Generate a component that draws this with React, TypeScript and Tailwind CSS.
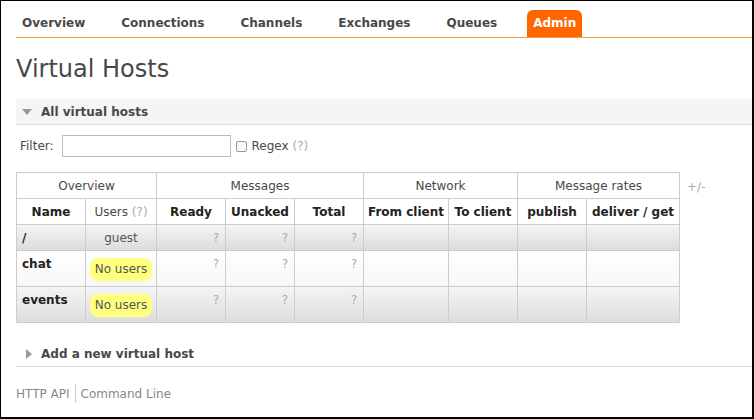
import React from "react";

const font = { fontFamily: '"DejaVu Sans", Verdana, sans-serif' };

const navItems = ["Overview", "Connections", "Channels", "Exchanges", "Queues"];

function Q() {
  return <span className="text-[#aaaaaa]">?</span>;
}

type Row = { name: string; users: string | null; tall: boolean; gray: boolean };

const rows: Row[] = [
  { name: "/", users: "guest", tall: false, gray: true },
  { name: "chat", users: null, tall: true, gray: false },
  { name: "events", users: null, tall: true, gray: true },
];

export default function App() {
  return (
    <div
      style={font}
      className="w-[754px] h-[419px] bg-white border-t border-l border-r-2 border-b-2 border-black text-[12px] text-[#484848] overflow-hidden"
    >
      {/* Nav */}
      <div className="ml-[15px] flex gap-[24px] pt-[9px] border-b border-[#eaa142]">
        {navItems.map((n) => (
          <div key={n} className="px-[6px] h-[27px] leading-[27px] font-bold text-[12px] text-[#484848]">
            {n}
          </div>
        ))}
        <div className="px-[6px] h-[27px] leading-[27px] font-bold text-[12px] text-white bg-[#ff6600] rounded-t-[6px]">
          Admin
        </div>
      </div>

      {/* Title */}
      <div className="ml-[15px] mt-[17px] h-[28px] leading-[28px] text-[24px] text-[#484848]">Virtual Hosts</div>

      {/* Section header */}
      <div className="ml-[15px] mt-[16px] h-[26px] bg-[#f5f5f5] border-b border-[#dddddd] flex items-center">
        <svg width="10" height="6" viewBox="0 0 10 6" className="ml-[6px]">
          <polygon points="0,0 10,0 5,6" fill="#999999" />
        </svg>
        <span className="ml-[9px] font-bold text-[12px] text-[#484848]">All virtual hosts</span>
      </div>

      {/* Filter */}
      <div className="ml-[19px] mt-[10px] flex items-center h-[22px]">
        <span>Filter:</span>
        <div className="ml-[8px] w-[169px] h-[22px] border border-[#bbbbbb] bg-white" />
        <div className="ml-[5px] w-[11px] h-[11px] border border-[#999999] rounded-[2px] bg-[#f8f8f8]" />
        <span className="ml-[5px]">
          Regex <span className="text-[#aaaaaa]">(?)</span>
        </span>
      </div>

      {/* Table */}
      <div className="ml-[15px] mt-[15px] flex items-start">
        <table className="table-fixed border-collapse border border-[#cccccc] w-[663px]">
          <colgroup>
            <col className="w-[69px]" />
            <col className="w-[71px]" />
            <col className="w-[69px]" />
            <col className="w-[69px]" />
            <col className="w-[69px]" />
            <col className="w-[85px]" />
            <col className="w-[69px]" />
            <col className="w-[69px]" />
            <col className="w-[93px]" />
          </colgroup>
          <thead>
            <tr className="h-[26px]">
              <th colSpan={2} className="border border-[#cccccc] font-normal text-center p-0">Overview</th>
              <th colSpan={3} className="border border-[#cccccc] font-normal text-center p-0">Messages</th>
              <th colSpan={2} className="border border-[#cccccc] font-normal text-center p-0">Network</th>
              <th colSpan={2} className="border border-[#cccccc] font-normal text-center p-0">Message rates</th>
            </tr>
            <tr className="h-[26px]">
              <th className="border border-[#cccccc] font-bold text-center p-0 text-[#222222]">Name</th>
              <th className="border border-[#cccccc] font-normal text-center p-0">
                Users <span className="text-[#aaaaaa]">(?)</span>
              </th>
              <th className="border border-[#cccccc] font-bold text-center p-0 text-[#222222]">Ready</th>
              <th className="border border-[#cccccc] font-bold text-center p-0 text-[#222222]">Unacked</th>
              <th className="border border-[#cccccc] font-bold text-center p-0 text-[#222222]">Total</th>
              <th className="border border-[#cccccc] font-bold text-center p-0 text-[#222222] whitespace-nowrap">From client</th>
              <th className="border border-[#cccccc] font-bold text-center p-0 text-[#222222] whitespace-nowrap">To client</th>
              <th className="border border-[#cccccc] font-bold text-center p-0 text-[#222222]">publish</th>
              <th className="border border-[#cccccc] font-bold text-center p-0 text-[#222222] whitespace-nowrap">deliver / get</th>
            </tr>
          </thead>
          <tbody>
            {rows.map((r) => (
              <tr
                key={r.name}
                className={
                  (r.tall ? "h-[36px] " : "h-[26px] ") +
                  (r.gray
                    ? "bg-gradient-to-b from-[#f4f4f4] to-[#dcdcdc]"
                    : "bg-gradient-to-b from-[#ffffff] to-[#f6f6f6]")
                }
              >
                <td className="border border-[#cccccc] align-top pt-[6px] pl-[5px] leading-[14px] font-bold text-[#222222]">
                  {r.name}
                </td>
                <td className="border border-[#cccccc] align-top text-center p-0">
                  {r.users ? (
                    <div className="pt-[6px] leading-[14px] text-[#555555]">{r.users}</div>
                  ) : (
                    <div className="mt-[7px] ml-[4px] w-[62px] h-[23px] leading-[23px] rounded-[8px] bg-[#ffff80] text-[#555555]">
                      No users
                    </div>
                  )}
                </td>
                {[0, 1, 2].map((i) => (
                  <td key={i} className="border border-[#cccccc] align-top text-right pr-[6px] pt-[6px] leading-[14px] text-[11.5px]">
                    <Q />
                  </td>
                ))}
                {[0, 1, 2, 3].map((i) => (
                  <td key={"n" + i} className="border border-[#cccccc]" />
                ))}
              </tr>
            ))}
          </tbody>
        </table>
        <span className="ml-[7px] mt-[6px] text-[#aaaaaa]">+/-</span>
      </div>

      {/* Add new */}
      <div className="ml-[15px] mt-[18px] h-[26px] border-b border-[#dddddd] flex items-center">
        <svg width="6" height="10" viewBox="0 0 6 10" className="ml-[10px]">
          <polygon points="0,0 6,5 0,10" fill="#999999" />
        </svg>
        <span className="ml-[9px] font-bold text-[12px] text-[#484848]">Add a new virtual host</span>
      </div>

      {/* Footer */}
      <div className="ml-[15px] mt-[17px] flex items-center text-[#888888] leading-[16px]">
        <span>HTTP API</span>
        <span className="mx-[5px] w-px h-[19px] bg-[#cccccc]" />
        <span>Command Line</span>
      </div>
    </div>
  );
}
